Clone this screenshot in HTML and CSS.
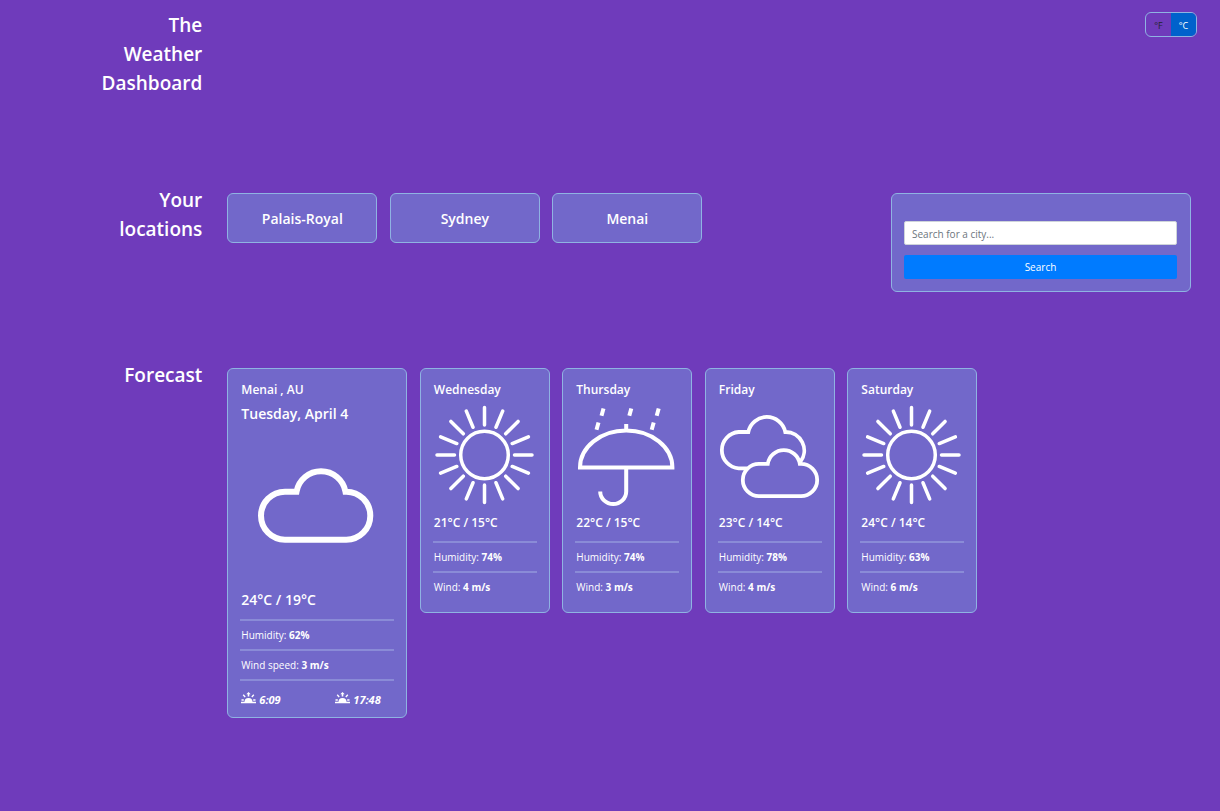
FILE: index.html
```html
<!DOCTYPE html>
<html lang="en">
<head>
<meta charset="utf-8">
<meta name="viewport" content="width=device-width, initial-scale=1">
<title>The Weather Dashboard</title>
<link rel="stylesheet" href="styles.css">
</head>
<body>
<svg class="symbols" aria-hidden="true">
  <symbol id="sun" viewBox="0 0 100 100">
    <g fill="none" stroke="currentColor" stroke-width="3.5" stroke-linecap="round">
      <circle cx="49.5" cy="50" r="23.8"/>
      <path id="ray" d="M49.5 2.5V20M49.5 80V97.5M2 50H19.5M79.500 50H97"/>
      <use href="#ray" transform="rotate(22.5 49.5 50)"/>
      <use href="#ray" transform="rotate(45 49.5 50)"/>
      <use href="#ray" transform="rotate(67.5 49.5 50)"/>
    </g>
  </symbol>
  <symbol id="sunrise" viewBox="0 0 15 14">
    <path fill="currentColor" d="M3.500 10a4 4 0 0 1 8 0zM7.500 0l2.200 2.200H8.300V4.500H6.700V2.200H5.300z"/>
    <path fill="none" stroke="currentColor" stroke-width="1.400" d="M0 10.500H15M.5 8H2.800M12.200 8H14.500M2.200 2.800L4.200 4.900M12.800 2.800L10.800 4.900"/>
  </symbol>
</svg>

<main class="dashboard">
  <section class="band">
    <h1 class="band-title">The Weather Dashboard</h1>
    <div class="band-body top">
      <div class="units" role="group" aria-label="Temperature units">
        <button type="button" class="unit">°F</button>
        <button type="button" class="unit unit-active" aria-pressed="true">°C</button>
      </div>
    </div>
  </section>

  <section class="band">
    <h2 class="band-title">Your locations</h2>
    <div class="band-body places">
      <div class="place-list">
        <button type="button" class="panel place">Palais-Royal</button>
        <button type="button" class="panel place">Sydney</button>
        <button type="button" class="panel place">Menai</button>
      </div>
      <form class="panel search">
        <input class="search-input" type="text" placeholder="Search for a city..." aria-label="Search for a city">
        <button class="search-button" type="submit">Search</button>
      </form>
    </div>
  </section>

  <section class="band">
    <h2 class="band-title">Forecast</h2>
    <div class="band-body">
      <div class="forecast">
        <article class="panel card today">
          <h3 class="day">Menai , AU</h3>
          <p class="date">Tuesday, April 4</p>
          <svg class="icon" viewBox="0 0 150 150" role="img" aria-label="Cloudy"><path fill="none" stroke="currentColor" stroke-width="6" d="M43 109.700A24 24 0 0 1 43 61.700H54.500A24.900 24.900 0 0 1 103.500 61.700H104.300A24 24 0 0 1 104.300 109.700Z"/></svg>
          <p class="temp">24°C / 19°C</p>
          <p class="fact">Humidity: <b>62%</b></p>
          <p class="fact">Wind speed: <b>3 m/s</b></p>
          <div class="fact sun-times">
            <span class="sun-time"><svg class="mini" aria-label="Sunrise"><use href="#sunrise"/></svg><em>6:09</em></span>
            <span class="sun-time"><svg class="mini" aria-label="Sunset"><use href="#sunrise"/></svg><em>17:48</em></span>
          </div>
        </article>
        <article class="panel card">
          <h3 class="day">Wednesday</h3>
          <svg class="icon" role="img" aria-label="Sunny"><use href="#sun"/></svg>
          <p class="temp">21°C / 15°C</p>
          <p class="fact">Humidity: <b>74%</b></p>
          <p class="fact">Wind: <b>4 m/s</b></p>
        </article>
        <article class="panel card">
          <h3 class="day">Thursday</h3>
          <svg class="icon" viewBox="0 0 100 100" role="img" aria-label="Rain"><g fill="none" stroke="currentColor" stroke-width="4"><path d="M3 62.500A46.200 37 0 0 1 95.400 62.500ZM49.200 19V26M49.200 62.500V86.500A13 12.500 0 0 1 23.200 86.500"/><path d="M26.500 3.500L24.500 10.700M21.500 17.500L19.500 24.700M54.300 3.500L52.300 10.700M81.700 3.500L79.700 10.700M76.700 17.500L74.700 24.700"/></g></svg>
          <p class="temp">22°C / 15°C</p>
          <p class="fact">Humidity: <b>74%</b></p>
          <p class="fact">Wind: <b>3 m/s</b></p>
        </article>
        <article class="panel card">
          <h3 class="day">Friday</h3>
          <svg class="icon" viewBox="1 0 100 100" role="img" aria-label="Overcast"><path fill="none" stroke="currentColor" stroke-width="3.800" d="M28 63.300H19.700A18.200 18.200 0 0 1 19.700 27H29.300A18.900 18.900 0 0 1 66.300 27A18.500 18.500 0 0 1 81.200 57M40 91.200A16.200 16.200 0 0 1 40 58.800H48.800A16.200 16.200 0 0 1 80.800 58.800H82A16.200 16.200 0 0 1 82 91.200Z"/></svg>
          <p class="temp">23°C / 14°C</p>
          <p class="fact">Humidity: <b>78%</b></p>
          <p class="fact">Wind: <b>4 m/s</b></p>
        </article>
        <article class="panel card">
          <h3 class="day">Saturday</h3>
          <svg class="icon" role="img" aria-label="Sunny"><use href="#sun"/></svg>
          <p class="temp">24°C / 14°C</p>
          <p class="fact">Humidity: <b>63%</b></p>
          <p class="fact">Wind: <b>6 m/s</b></p>
        </article>
      </div>
    </div>
  </section>
</main>
</body>
</html>
```

FILE: styles.css
```css
* { box-sizing: border-box; }

body {
  margin: 0;
  min-height: 100vh;
  background: #6f3bbb;
  color: #fff;
  font-family: "Segoe UI", "Open Sans", "Noto Sans", sans-serif;
  font-size: 10px;
}

h1, h2, h3, p { margin: 0; }
button, input { font: inherit; }
.symbols { position: absolute; width: 0; height: 0; }

.dashboard { padding-top: 11px; }

.band {
  display: grid;
  grid-template-columns: 1fr 5fr;
  min-height: 175px;
}

.band-title {
  padding: 0 1px 0 96px;
  font-size: 19px;
  font-weight: 600;
  line-height: 29px;
  text-align: right;
}

.band-body { padding: 7px 29px 0 24px; }

.band-body.top {
  display: flex;
  justify-content: flex-end;
  align-items: flex-start;
  padding: 1px 23px 0 0;
}

.units {
  display: flex;
  width: 52px;
  height: 25px;
  border: 1px solid #8fb3e2;
  border-radius: 6px;
  overflow: hidden;
}

.unit {
  flex: 1;
  padding: 2px 0 0;
  border: 0;
  background: transparent;
  color: #212529;
  font-size: 9px;
}

.unit-active { background: #0062cc; color: #fff; }

.panel {
  border: 1px solid #8fb3e2;
  border-radius: 6px;
  background: #7268ca;
  color: #fff;
}

.places {
  display: flex;
  justify-content: space-between;
  align-items: flex-start;
}

.place-list {
  display: flex;
  justify-content: space-between;
  width: 475px;
}

.place {
  width: 150px;
  height: 50px;
  padding: 0;
  font-size: 14px;
  font-weight: 600;
}

.search {
  display: flex;
  flex-direction: column;
  gap: 10px;
  width: 300px;
  padding: 27px 13px 12px 12px;
}

.search-input, .search-button {
  width: 100%;
  height: 24px;
  border-radius: 2px;
}

.search-input {
  padding: 2px 7px 0;
  border: 1px solid #ced4da;
  background: #fff;
  color: #495057;
}

.search-input::placeholder { color: #6c757d; opacity: 1; }

.search-button {
  padding: 0;
  border: 0;
  background: #007bff;
  color: #fff;
}

.forecast {
  display: flex;
  justify-content: space-between;
  align-items: flex-start;
  width: 750px;
}

.card {
  width: 130px;
  padding: 11px 12px;
}

.card.today { width: 180px; padding-bottom: 9px; }

.day, .temp {
  font-size: 12px;
  font-weight: 600;
  line-height: 20px;
}

.day, .date, .temp, .fact { padding-left: 1px; }

.date, .today .temp {
  font-size: 14px;
  font-weight: 600;
  line-height: 24px;
}

.date { margin-top: 2px; }

.icon {
  display: block;
  width: 100px;
  height: 100px;
  margin: 5px auto 8px;
  overflow: visible;
}

.today .icon {
  width: 150px;
  height: 150px;
  margin: 4px auto 8px;
}

.temp { margin-bottom: 8px; }

.today .temp { margin-bottom: 7px; }

.fact {
  height: 30px;
  border-top: 2px solid #8a8bd7;
  line-height: 28px;
}

.fact b { font-weight: 700; }

.sun-times {
  display: flex;
  height: auto;
  padding-top: 11px;
  line-height: 16px;
}

.sun-time {
  display: flex;
  flex: 0 0 94px;
  gap: 3px;
  font-size: 11px;
  font-weight: 700;
}

.sun-time:last-child { flex-basis: auto; }

.mini { width: 15px; height: 14px; }
```
